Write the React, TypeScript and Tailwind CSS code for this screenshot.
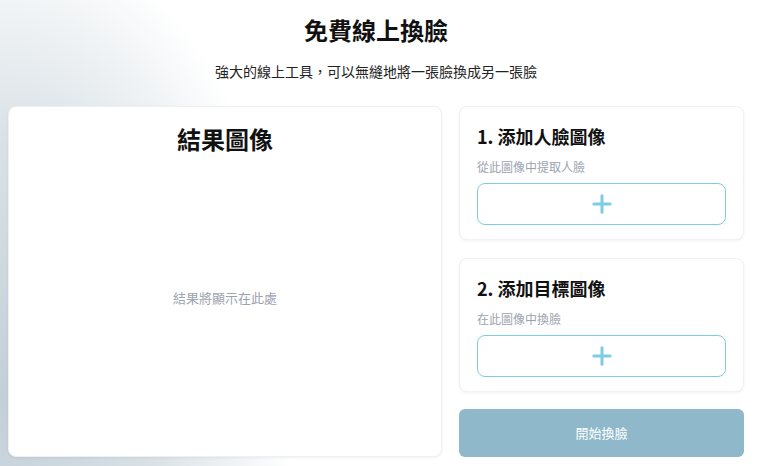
import { Plus } from 'lucide-react'

interface UploadCardProp {
    title: string;
    hint: string;
}

function UploadCard({ title, hint }: UploadCardProp) {
    return (
        <div className="h-[134px] rounded-lg border border-[#f0f1f3] bg-white px-[17px] pt-[17px] shadow-[0_1px_3px_rgba(0,0,0,0.06)]">
            <h2 className="text-[18px] leading-[24px] font-bold text-[#111]">{title}</h2>
            <p className="mt-[11px] text-[12px] leading-[16px] text-[#9ca3af]">{hint}</p>
            <button className="mt-[8px] flex h-[42px] w-full items-center justify-center rounded-lg border border-[#7fcde4] bg-white">
                <Plus size={28} strokeWidth={2.6} className="text-[#7fcde4]" />
            </button>
        </div>
    );
}

export default function App() {
    return (
        <div className="relative h-[466px] w-[766px] overflow-hidden bg-[radial-gradient(ellipse_45%_120%_at_0%_85%,#c3cfd8_0%,#d9e1e6_45%,#ffffff_85%)] font-['Noto_Sans_CJK_TC','Noto_Sans',sans-serif]">
            <div className="w-[752px] px-2">
                <h1 className="pt-[14px] text-center text-[24px] leading-[32px] font-bold text-[#111]">免費線上換臉</h1>
                <p className="mt-[15px] text-center text-[14px] leading-[20px] text-[#222]">強大的線上工具，可以無縫地將一張臉換成另一張臉</p>

                <div className="mt-[25px] flex gap-[17px]">
                    <div className="flex h-[351px] w-[434px] flex-col items-center rounded-lg border border-[#eef0f2] bg-white shadow-[0_1px_3px_rgba(0,0,0,0.06)]">
                        <h2 className="pt-[15px] text-[24px] leading-[34px] font-bold text-[#111]">結果圖像</h2>
                        <div className="flex flex-1 items-center justify-center pb-[16px]">
                            <p className="text-[13px] text-[#9ca3af]">結果將顯示在此處</p>
                        </div>
                    </div>

                    <div className="flex w-[285px] flex-col">
                        <UploadCard title="1. 添加人臉圖像" hint="從此圖像中提取人臉" />
                        <div className="mt-[18px]">
                            <UploadCard title="2. 添加目標圖像" hint="在此圖像中換臉" />
                        </div>
                        <button className="mt-[17px] h-[48px] w-full rounded-md bg-[#8fb9ca] text-[13px] text-white">開始換臉</button>
                    </div>
                </div>
            </div>
        </div>
    );
}
